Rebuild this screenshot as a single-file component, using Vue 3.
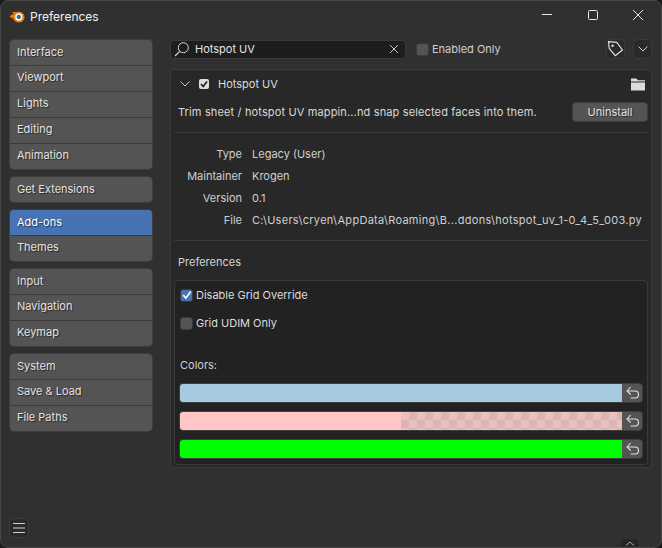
<script setup>
const groups = [
  ['Interface', 'Viewport', 'Lights', 'Editing', 'Animation'],
  ['Get Extensions'],
  ['Add-ons', 'Themes'],
  ['Input', 'Navigation', 'Keymap'],
  ['System', 'Save & Load', 'File Paths'],
]
const info = [
  ['Type', 'Legacy (User)'],
  ['Maintainer', 'Krogen'],
  ['Version', '0.1'],
  ['File', 'C:\\Users\\cryen\\AppData\\Roaming\\B...ddons\\hotspot_uv_1-0_4_5_003.py'],
]
const colors = ['blue', 'pink', 'green']
</script>

<template>
  <div class="window">
    <header class="titlebar">
      <svg class="logo" width="16" height="14" viewBox="0 0 16 14">
        <path d="M0.5 7.2 L5 4.6 L2.6 3 L8 3 C12 2.2 15.5 4.5 15.5 8 C15.5 11.3 12.8 13.5 9.8 13.5 C6.8 13.5 4.6 11.8 4.2 9.6 L1.4 8.2 Z" fill="#e87d0d"/>
        <circle cx="9.8" cy="7.9" r="3.6" fill="#fff"/>
        <circle cx="9.8" cy="7.9" r="2.2" fill="#2f6fa8"/>
      </svg>
      <span class="title">Preferences</span>
      <div class="win-controls">
        <svg width="12" height="12" viewBox="0 0 12 12"><path d="M1 5.5H11" stroke="#e8e8e8" stroke-width="1"/></svg>
        <svg width="12" height="12" viewBox="0 0 12 12"><rect x="1.5" y="1.5" width="9" height="9" rx="1" fill="none" stroke="#e8e8e8" stroke-width="1"/></svg>
        <svg width="12" height="12" viewBox="0 0 12 12"><path d="M1 1L11 11M11 1L1 11" stroke="#e8e8e8" stroke-width="1"/></svg>
      </div>
    </header>

    <div class="content">
      <nav class="sidebar">
        <div v-for="(g, i) in groups" :key="i" class="nav-group">
          <div v-for="item in g" :key="item" class="nav-item" :class="{ active: item === 'Add-ons' }">{{ item }}</div>
        </div>
        <button class="menu-btn">
          <svg width="14" height="12" viewBox="0 0 14 12"><path d="M1 1.5H13M1 6H13M1 10.5H13" stroke="#d0d0d0" stroke-width="1"/></svg>
        </button>
      </nav>

      <main class="main">
        <div class="toolbar">
          <div class="search">
            <svg class="lens" width="16" height="16" viewBox="0 0 16 16"><circle cx="9.3" cy="6.7" r="5" fill="none" stroke="#d8d8d8" stroke-width="1"/><path d="M5.7 10.3L1 15" stroke="#d8d8d8" stroke-width="1.2"/></svg>
            <span class="search-text">Hotspot UV</span>
            <svg class="clear" width="10" height="10" viewBox="0 0 10 10"><path d="M1 1L9 9M9 1L1 9" stroke="#c4c4c4" stroke-width="1"/></svg>
          </div>
          <label class="enabled"><span class="box off"></span>Enabled Only</label>
          <button class="tool-btn tag">
            <svg width="17" height="18" viewBox="0 0 17 18"><path d="M1.5 1.7 L9.8 2.3 L15.5 10 L8.2 15.7 L2.2 8.3 Z" fill="none" stroke="#e0e0e0" stroke-width="1.2" stroke-linejoin="round"/><circle cx="5.6" cy="5.8" r="1.2" fill="#e0e0e0"/></svg>
          </button>
          <button class="tool-btn chev">
            <svg width="10" height="6" viewBox="0 0 10 6"><path d="M0.5 0.5L5 5L9.5 0.5" fill="none" stroke="#d0d0d0" stroke-width="1"/></svg>
          </button>
        </div>

        <section class="panel">
          <div class="addon-head">
            <svg width="10" height="6" viewBox="0 0 10 6"><path d="M0.5 0.5L5 5L9.5 0.5" fill="none" stroke="#c8c8c8" stroke-width="1"/></svg>
            <span class="head-check">
              <svg width="8" height="8" viewBox="0 0 8 8"><path d="M1 4L3.2 6.4L7 1.4" fill="none" stroke="#222" stroke-width="1.7"/></svg>
            </span>
            <span class="addon-name">Hotspot UV</span>
            <svg class="folder" width="14" height="13" viewBox="0 0 14 13"><path d="M0 0.5H5.5L7 2.2H14V3.6H0Z M0 4.6H14V12.5H0Z" fill="#dcdcdc"/></svg>
          </div>

          <div class="desc-row">
            <span class="desc">Trim sheet / hotspot UV mappin...nd snap selected faces into them.</span>
            <button class="uninstall">Uninstall</button>
          </div>

          <div class="divider first"></div>

          <div class="info">
            <div v-for="r in info" :key="r[0]" class="info-row">
              <span class="info-label">{{ r[0] }}</span>
              <span class="info-value" :class="{ path: r[0] === 'File' }">{{ r[1] }}</span>
            </div>
          </div>

          <div class="divider second"></div>

          <div class="prefs-title">Preferences</div>

          <div class="inner">
            <label class="check-row"><span class="box on">
              <svg width="10" height="10" viewBox="0 0 10 10"><path d="M1.2 5.2L3.9 8L8.8 1.6" fill="none" stroke="#fff" stroke-width="1.7"/></svg>
            </span>Disable Grid Override</label>
            <label class="check-row"><span class="box off"></span>Grid UDIM Only</label>
            <div class="colors-label">Colors:</div>
            <div class="swatches">
              <div v-for="c in colors" :key="c" class="swatch-row">
                <div class="swatch" :class="c"><template v-if="c === 'pink'"><span class="solid"></span><span class="checker"></span></template></div>
                <button class="revert">
                  <svg width="20" height="18" viewBox="0 0 20 18"><path d="M8.7 3L5 7L8.7 10.5" fill="none" stroke="#e2e2e2" stroke-width="1.1"/><path d="M5.5 7H13A3.5 3.5 0 0 1 13 14H8.7" fill="none" stroke="#e2e2e2" stroke-width="1.1"/></svg>
                </button>
              </div>
            </div>
          </div>
        </section>
      </main>
    </div>

    <div class="corner-tab">
      <svg width="10" height="5" viewBox="0 0 10 5"><path d="M1 4.5L5 1L9 4.5" fill="none" stroke="#a8a8a8" stroke-width="1"/></svg>
    </div>
  </div>
</template>

<style scoped>
.window {
  position: relative;
  width: 662px;
  height: 548px;
  box-sizing: border-box;
  background: #303030;
  border: 1px solid #474747;
  border-radius: 8px;
  display: flex;
  flex-direction: column;
  overflow: hidden;
  font-family: Inter, "Liberation Sans", sans-serif;
  font-size: 11px;
  color: #d9d9d9;
}
.titlebar {
  height: 31px;
  flex: none;
  display: flex;
  align-items: center;
  box-sizing: border-box;
  padding-left: 8px;
}
.logo { margin-top: -1px; }
.title { margin-left: 5px; font-size: 12px; color: #f0f0f0; margin-top: -1px; }
.win-controls {
  margin-left: auto;
  width: 103px;
  margin-right: 17px;
  display: flex;
  justify-content: space-between;
  margin-top: -3px;
}
.content {
  flex: 1;
  display: flex;
  padding: 8px 9px 9px 9px;
  gap: 18px;
  min-height: 0;
}
.sidebar {
  width: 142px;
  flex: none;
  display: flex;
  flex-direction: column;
  gap: 8.5px;
}
.nav-group {
  background: #545454;
  border-radius: 4px;
  overflow: hidden;
  box-shadow: 0 0 0 1px #3d3d3d;
}
.nav-item {
  height: 26px;
  line-height: 23px;
  box-sizing: border-box;
  padding-left: 7px;
  color: #e2e2e2;
  text-shadow: 1px 1px 1px rgba(0, 0, 0, 0.55);
  border-top: 1px solid #3c3c3c;
}
.nav-item:first-child { height: 24.5px; line-height: 24px; border-top: none; }
.nav-item.active { background: #4772b3; color: #fff; }
.menu-btn {
  margin-top: auto;
  margin-left: -1px;
  width: 20px;
  height: 20px;
  padding: 0;
  background: #2a2a2a;
  border: 1px solid #3d3d3d;
  border-radius: 4px;
  display: flex;
  align-items: center;
  justify-content: center;
}
.main {
  width: 482px;
  flex: none;
  display: flex;
  flex-direction: column;
  margin-top: -1px;
}
.toolbar {
  height: 20px;
  display: flex;
  align-items: center;
  margin-bottom: 10px;
}
.search {
  width: 236px;
  height: 19px;
  box-sizing: border-box;
  background: #1d1d1d;
  border: 1px solid #3a3a3a;
  border-radius: 4px;
  display: flex;
  align-items: center;
  padding-left: 3px;
  padding-right: 6px;
}
.lens { flex: none; }
.search-text { margin-left: 5px; color: #e4e4e4; }
.clear { margin-left: auto; }
.enabled {
  margin-left: 10px;
  display: flex;
  align-items: center;
  gap: 3px;
  color: #cfcfcf;
}
.box {
  width: 13px;
  height: 13px;
  box-sizing: border-box;
  border-radius: 3px;
  border: 1px solid #3a3a3a;
  display: flex;
  align-items: center;
  justify-content: center;
  flex: none;
}
.box.off { background: #545454; }
.box.on { background: #4772b3; }
.tool-btn {
  width: 19px;
  height: 20px;
  padding: 0;
  background: #2a2a2a;
  border: 1px solid #3a3a3a;
  border-radius: 4px;
  display: flex;
  align-items: center;
  justify-content: center;
}
.tag { margin-left: auto; }
.chev { margin-left: 8px; }
.panel {
  background: #282828;
  border: 1px solid #3a3a3a;
  border-radius: 4px;
  padding: 0 3px 1px;
  height: 399px;
  box-sizing: border-box;
}
.addon-head {
  height: 28px;
  display: flex;
  align-items: center;
  padding-left: 6px;
  padding-right: 3px;
}
.head-check {
  width: 10px;
  height: 10px;
  margin-left: 9px;
  background: #dcdcdc;
  border-radius: 2px;
  display: flex;
  align-items: center;
  justify-content: center;
}
.addon-name { margin-left: 9px; color: #dcdcdc; }
.folder { margin-left: auto; }
.desc-row {
  margin-top: 4px;
  height: 20px;
  display: flex;
  align-items: center;
  padding-left: 4px;
  justify-content: space-between;
}
.desc { color: #d9d9d9; letter-spacing: 0.14px; }
.uninstall {
  width: 76px;
  height: 20px;
  padding: 0;
  background: #545454;
  border: 1px solid #3d3d3d;
  border-radius: 4px;
  color: #e2e2e2;
  font: inherit;
  text-shadow: 1px 1px 1px rgba(0, 0, 0, 0.5);
}
.divider { height: 1px; background: #3a3a3a; }
.divider.first { margin-top: 10px; }
.divider.second { margin-top: 9px; }
.info { padding-top: 10px; }
.info-row {
  height: 22px;
  display: flex;
  align-items: center;
  gap: 10px;
  padding-left: 4px;
}
.info-label { width: 64px; text-align: right; color: #cfcfcf; }
.info-value { color: #cfcfcf; white-space: nowrap; }
.info-value.path { letter-spacing: 0.29px; }
.prefs-title {
  margin-top: 10px;
  height: 22px;
  line-height: 22px;
  padding-left: 4px;
  color: #d2d2d2;
}
.inner {
  margin-top: 7px;
  height: 185px;
  box-sizing: border-box;
  background: #222222;
  border: 1px solid #3a3a3a;
  border-radius: 4px;
  padding: 0 5px 6px;
}
.check-row {
  height: 28px;
  display: flex;
  align-items: center;
  gap: 3px;
  color: #dcdcdc;
}
.colors-label {
  margin-top: 17px;
  height: 22px;
  line-height: 22px;
  color: #cfcfcf;
}
.swatches {
  margin-top: 8px;
  display: flex;
  flex-direction: column;
  gap: 10px;
}
.swatch-row {
  display: flex;
  height: 18px;
  border-radius: 3px;
  box-shadow: 0 0 0 1px #3d3d3d;
}
.swatch {
  flex: 1;
  display: flex;
  overflow: hidden;
  border-radius: 3px 0 0 3px;
}
.swatch.blue { background: #a6cae0; }
.swatch.green { background: #00ff00; }
.solid { flex: 1; background: #ffc7c7; }
.checker {
  flex: 1;
  background: repeating-conic-gradient(#dcb4b4 0 25%, #e9c1c1 0 50%) 0 0 / 16px 16px;
}
.revert {
  width: 20px;
  flex: none;
  padding: 0;
  background: #545454;
  border: none;
  border-radius: 0 3px 3px 0;
  display: flex;
  align-items: center;
  justify-content: center;
}
.corner-tab {
  position: absolute;
  right: 22px;
  bottom: -1px;
  width: 18px;
  height: 9px;
  background: #252525;
  border-radius: 4px 4px 0 0;
  display: flex;
  justify-content: center;
  padding-top: 2px;
  box-sizing: border-box;
}
</style>
<style>
html, body { margin: 0; background: #1a1a1a; }
</style>
